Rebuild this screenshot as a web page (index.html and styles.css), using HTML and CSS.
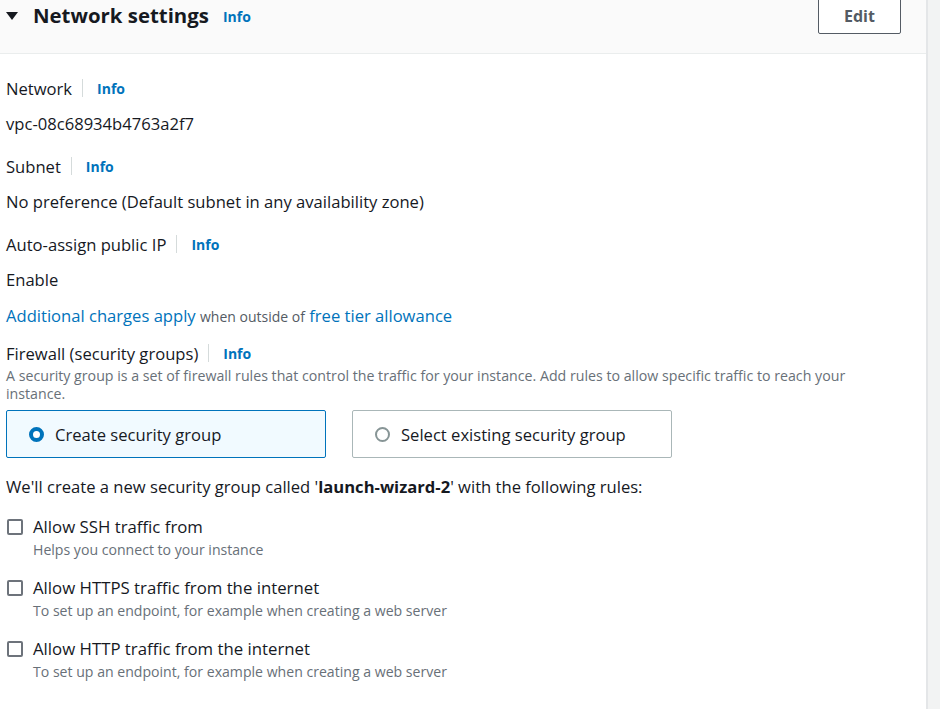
FILE: index.html
```html
<!DOCTYPE html>
<html>
<head>
<meta charset="utf-8">
<link rel="stylesheet" href="styles.css">
</head>
<body>
<div class="panel">
  <div class="header">
    <div class="title-wrap">
      <svg class="caret" width="12" height="9" viewBox="0 0 12 9"><polygon points="0,0 12,0 6,8" fill="#16191f"/></svg>
      <h2 class="title">Network settings</h2>
      <a class="info info-title">Info</a>
    </div>
    <button class="edit">Edit</button>
  </div>
  <div class="content">
    <div class="field">
      <div class="label-row"><span class="label">Network</span><span class="sep"></span><a class="info">Info</a></div>
      <div class="value">vpc-08c68934b4763a2f7</div>
    </div>
    <div class="field">
      <div class="label-row"><span class="label">Subnet</span><span class="sep"></span><a class="info">Info</a></div>
      <div class="value">No preference (Default subnet in any availability zone)</div>
    </div>
    <div class="field">
      <div class="label-row"><span class="label">Auto-assign public IP</span><span class="sep"></span><a class="info">Info</a></div>
      <div class="value">Enable</div>
    </div>
    <div class="charges"><a class="link">Additional charges apply</a> <span class="small">when outside of</span> <a class="link">free tier allowance</a></div>
    <div class="firewall">
      <div class="label-row"><span class="label">Firewall (security groups)</span><span class="sep"></span><a class="info">Info</a></div>
      <div class="desc">A security group is a set of firewall rules that control the traffic for your instance. Add rules to allow specific traffic to reach your instance.</div>
    </div>
    <div class="tiles">
      <label class="tile selected"><span class="radio on"></span>Create security group</label>
      <label class="tile"><span class="radio"></span>Select existing security group</label>
    </div>
    <p class="note">We'll create a new security group called '<b>launch-wizard-2</b>' with the following rules:</p>
    <div class="checks">
      <div class="check">
        <span class="box"></span>
        <div><div class="check-label">Allow SSH traffic from</div><div class="check-desc">Helps you connect to your instance</div></div>
      </div>
      <div class="check">
        <span class="box"></span>
        <div><div class="check-label">Allow HTTPS traffic from the internet</div><div class="check-desc">To set up an endpoint, for example when creating a web server</div></div>
      </div>
      <div class="check">
        <span class="box"></span>
        <div><div class="check-label">Allow HTTP traffic from the internet</div><div class="check-desc">To set up an endpoint, for example when creating a web server</div></div>
      </div>
    </div>
  </div>
</div>
</body>
</html>
```
FILE: styles.css
```css
html, body {
  margin: 0;
  padding: 0;
  background: #f2f3f3;
  height: 100%;
}
body {
  font-family: "Open Sans", "Noto Sans", sans-serif;
  color: #16191f;
  overflow: hidden;
}
.panel {
  width: 928px;
  min-height: 709px;
  background: #fff;
  border-right: 2px solid #e4e6e8;
  box-sizing: border-box;
}
.header {
  height: 54px;
  background: #fafafa;
  border-bottom: 1px solid #eaeded;
  display: flex;
  justify-content: space-between;
  align-items: flex-start;
  padding: 0 25px 0 6px;
  box-sizing: border-box;
}
.title-wrap {
  display: flex;
  align-items: center;
  height: 30px;
}
.caret {
  margin-right: 15px;
  margin-top: 2px;
}
.title {
  margin: 0;
  font-size: 20.4px;
  font-weight: 700;
  line-height: 30px;
}
.info {
  color: #0073bb;
  font-size: 14px;
  font-weight: 700;
  cursor: pointer;
}
.info-title {
  margin-left: 14px;
  margin-top: 3px;
}
.edit {
  margin-top: -3px;
  width: 83px;
  height: 37px;
  border: 1px solid #545b64;
  border-radius: 2px;
  background: #fff;
  color: #545b64;
  font-family: inherit;
  font-size: 16px;
  font-weight: 700;
  padding: 0;
}
.content {
  padding: 16px 6px 0 6px;
}
.label-row {
  display: flex;
  align-items: center;
  height: 36px;
}
.label {
  font-size: 16.6px;
}
.sep {
  width: 1px;
  height: 18px;
  background: #d5dbdb;
  margin: 0 14px 0 10px;
}
.value {
  font-size: 16.6px;
  height: 42px;
  line-height: 36px;
}
.charges {
  font-size: 16.6px;
  line-height: 24px;
  height: 24px;
}
.link {
  color: #0073bb;
}
.small {
  font-size: 14px;
  color: #545b64;
}
.firewall {
  margin-top: 11px;
}
.firewall .label-row {
  height: 28px;
}
.desc {
  font-size: 14.2px;
  color: #687078;
  line-height: 18px;
  width: 860px;
}
.tiles {
  display: flex;
  gap: 26px;
  margin-top: 7px;
}
.tile {
  display: flex;
  align-items: center;
  height: 48px;
  box-sizing: border-box;
  border: 1px solid #aab7b8;
  border-radius: 2px;
  padding-left: 22px;
  font-size: 16.6px;
  width: 320px;
}
.tile.selected {
  background: #f1faff;
  border-color: #0073bb;
}
.radio {
  width: 15px;
  height: 15px;
  border-radius: 50%;
  border: 2px solid #879596;
  box-sizing: border-box;
  margin-right: 11px;
  background: #fff;
}
.radio.on {
  border: 4.5px solid #0073bb;
}
.note {
  font-size: 16.6px;
  margin: 19px 0 0 0;
  line-height: 20px;
}
.checks {
  margin-top: 19px;
}
.check {
  display: flex;
  align-items: flex-start;
  height: 61px;
}
.box {
  width: 16px;
  height: 16px;
  border: 2px solid #545b64;
  border-radius: 2px;
  box-sizing: border-box;
  margin: 3px 10px 0 1px;
  opacity: 0.85;
}
.check-label {
  font-size: 16.8px;
  line-height: 22px;
}
.check-desc {
  font-size: 14.1px;
  color: #687078;
  line-height: 24px;
}
```
